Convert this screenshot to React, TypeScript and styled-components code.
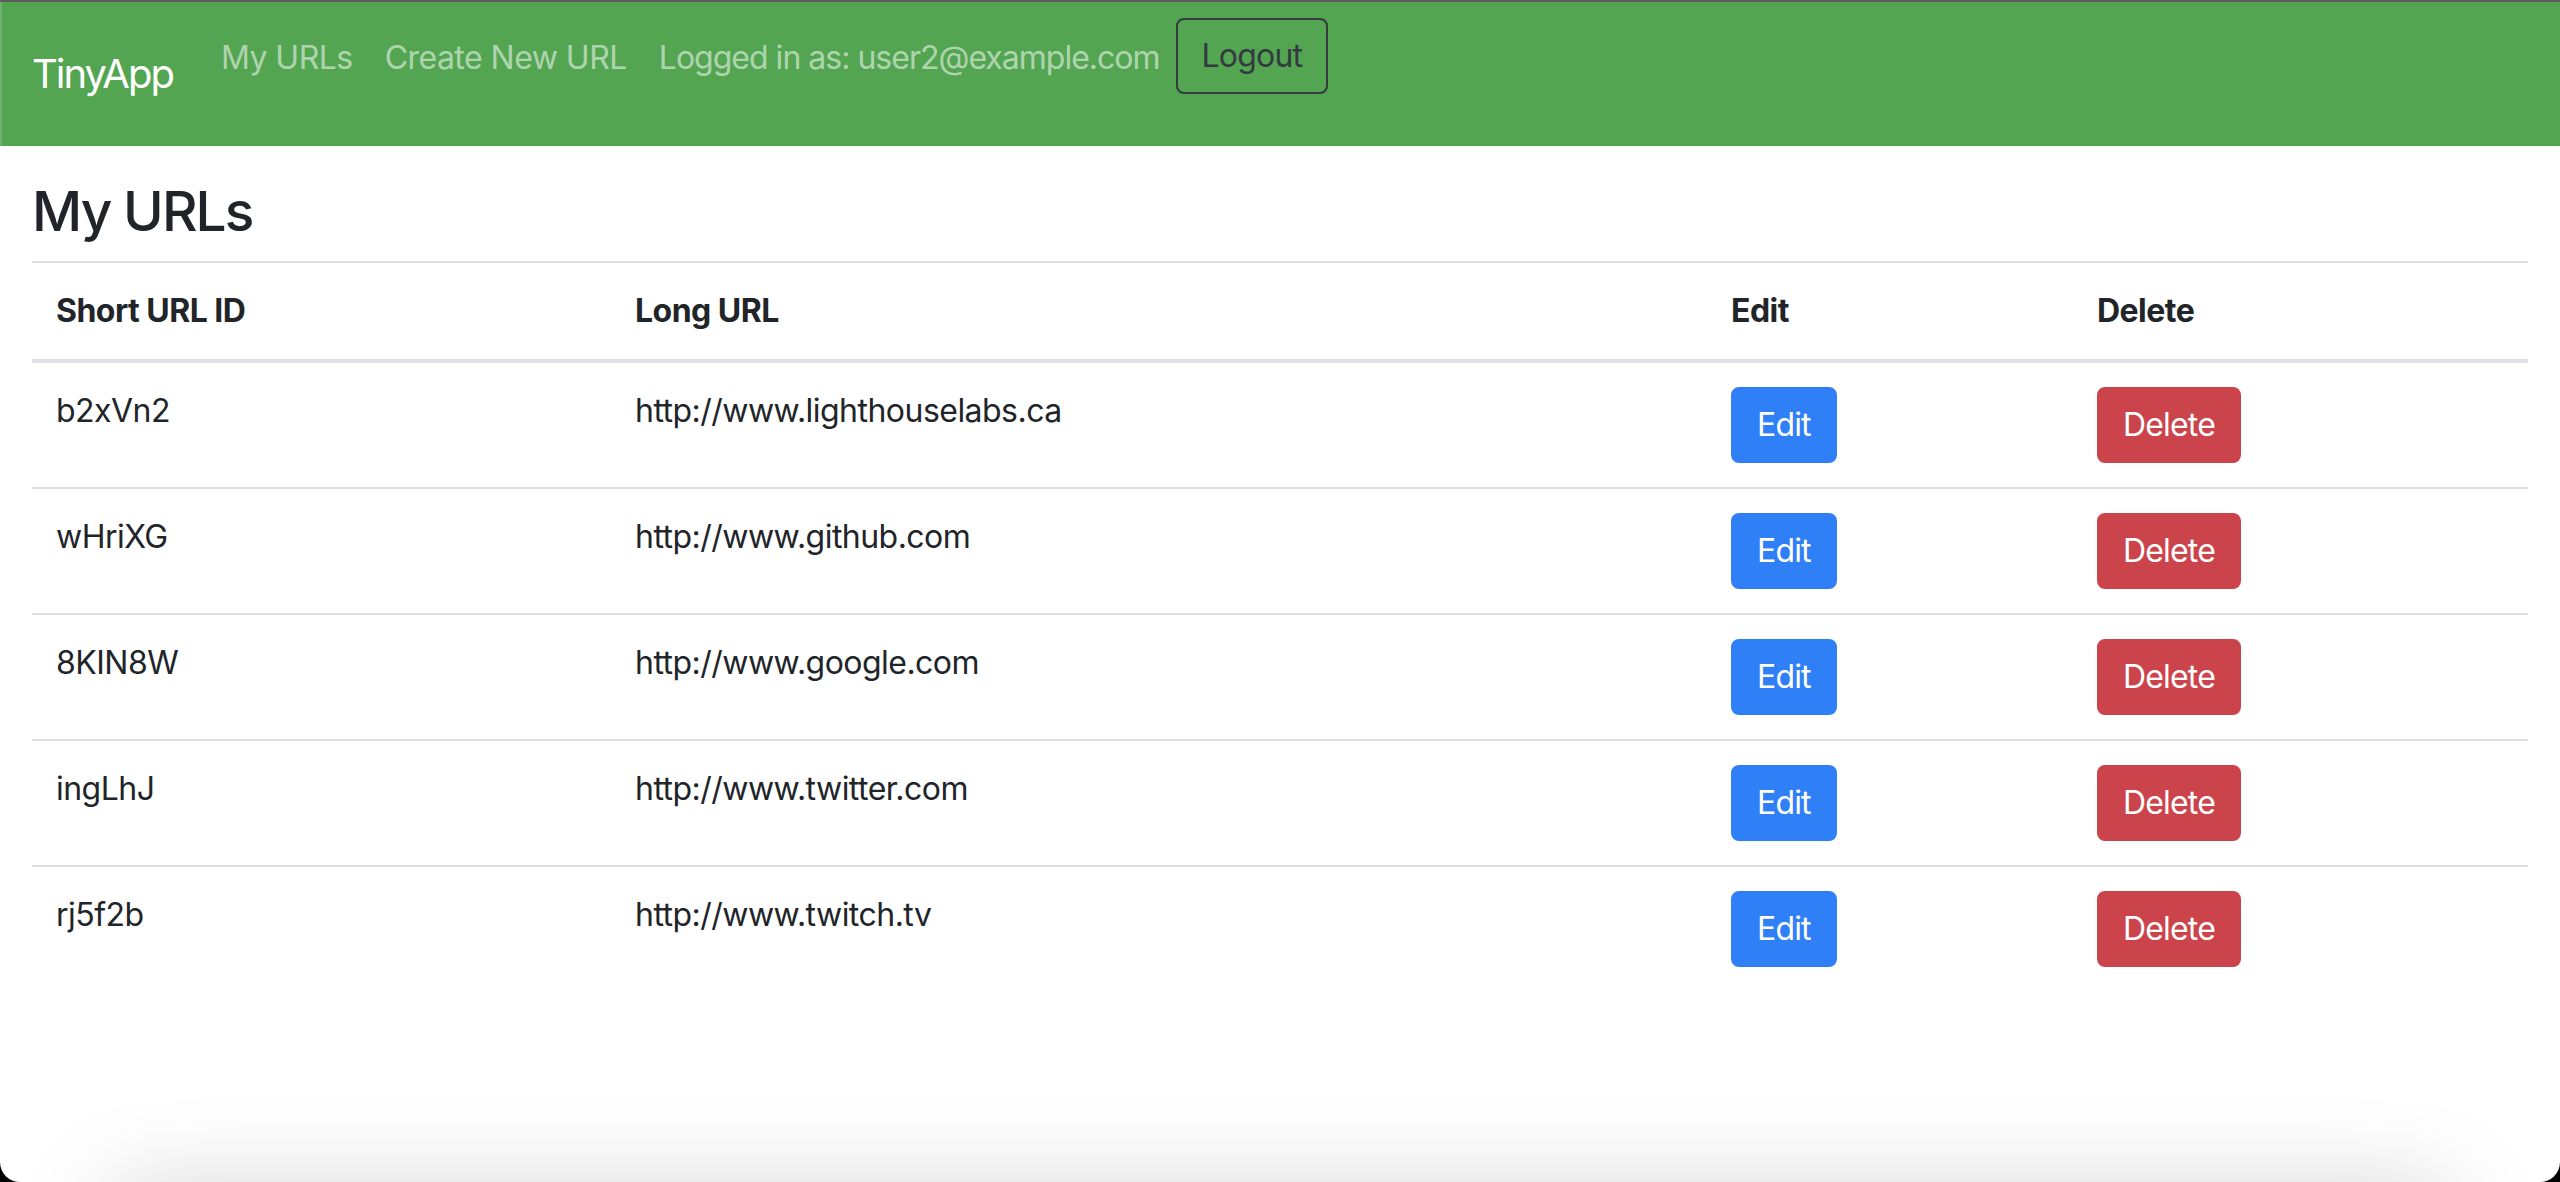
import React from "react";
import styled, { createGlobalStyle } from "styled-components";

type UrlRow = {
    id: string;
    longUrl: string;
};

const urls: UrlRow[] = [
    { id: "b2xVn2", longUrl: "http://www.lighthouselabs.ca" },
    { id: "wHriXG", longUrl: "http://www.github.com" },
    { id: "8KIN8W", longUrl: "http://www.google.com" },
    { id: "ingLhJ", longUrl: "http://www.twitter.com" },
    { id: "rj5f2b", longUrl: "http://www.twitch.tv" },
];

const columns = [
    { label: "Short URL ID", width: 579 },
    { label: "Long URL", width: 1096 },
    { label: "Edit", width: 366 },
    { label: "Delete", width: 455 },
];

const App: React.FC = () => {
    return (
        <>
            <GlobalStyle />
            <Frame>
                <Navbar>
                    <Brand href="#">TinyApp</Brand>
                    <NavList>
                        <NavLink href="#">My URLs</NavLink>
                        <NavLink href="#">Create New URL</NavLink>
                        <NavText>Logged in as: user2@example.com</NavText>
                        <LogoutButton type="button">Logout</LogoutButton>
                    </NavList>
                </Navbar>

                <Main>
                    <Heading>My URLs</Heading>
                    <Table>
                        <colgroup>
                            {columns.map(col => (
                                <Col key={col.label} $width={col.width} />
                            ))}
                        </colgroup>
                        <thead>
                            <tr>
                                {columns.map(col => (
                                    <HeadCell key={col.label}>{col.label}</HeadCell>
                                ))}
                            </tr>
                        </thead>
                        <tbody>
                            {urls.map(url => (
                                <tr key={url.id}>
                                    <Cell>{url.id}</Cell>
                                    <Cell>{url.longUrl}</Cell>
                                    <Cell>
                                        <ActionButton type="button" $variant="edit">
                                            Edit
                                        </ActionButton>
                                    </Cell>
                                    <Cell>
                                        <ActionButton type="button" $variant="delete">
                                            Delete
                                        </ActionButton>
                                    </Cell>
                                </tr>
                            ))}
                        </tbody>
                    </Table>
                </Main>

                <BottomShade />
            </Frame>
        </>
    );
};

export default App;

const GlobalStyle = createGlobalStyle`
    html, body {
        margin: 0;
        height: 100%;
        overflow: hidden;
        background: #000;
    }

    body {
        font-family: Inter, "Liberation Sans", sans-serif;
        letter-spacing: -0.033em;
        color: #212529;
    }

    * {
        box-sizing: border-box;
    }
`;

const Frame = styled.div`
    position: relative;
    height: 100vh;
    background: #fff;
    overflow: hidden;
    border-bottom-left-radius: 20px;
    border-bottom-right-radius: 20px;
`;

const Navbar = styled.nav`
    display: flex;
    align-items: center;
    padding: 16px 32px;
    background-color: #53a552;
    border-top: 2px solid #5c5c5c;
    box-shadow: inset 2px 0 0 rgba(255, 255, 255, 0.15);
`;

const Brand = styled.a`
    padding: 10px 0;
    margin-right: 32px;
    font-size: 40px;
    line-height: 60px;
    letter-spacing: -0.05em;
    color: #fff;
    text-decoration: none;
`;

const NavList = styled.div`
    display: flex;
    align-items: flex-start;
    align-self: flex-start;
    margin-bottom: 32px;
`;

const NavLink = styled.a`
    padding: 16px;
    font-size: 32px;
    line-height: 48px;
    color: rgba(255, 255, 255, 0.55);
    text-decoration: none;
`;

const NavText = styled.span`
    padding: 16px;
    font-size: 32px;
    line-height: 48px;
    letter-spacing: -0.031em;
    color: rgba(255, 255, 255, 0.55);
`;

const LogoutButton = styled.button`
    padding: 12px 24px;
    font-family: inherit;
    font-size: 32px;
    letter-spacing: -0.026em;
    line-height: 48px;
    color: #343a40;
    background: transparent;
    border: 2px solid #343a40;
    border-radius: 8px;
    cursor: pointer;
`;

const Main = styled.main`
    padding: 0 32px;
`;

const Heading = styled.h3`
    margin: 32px 0 16px;
    font-size: 55px;
    font-weight: 500;
    line-height: 67px;
    letter-spacing: -0.035em;
`;

const Table = styled.table`
    width: 100%;
    table-layout: fixed;
    border-collapse: collapse;
`;

const Col = styled.col<{ $width: number }>`
    width: ${({ $width }) => $width}px;
`;

const HeadCell = styled.th`
    padding: 24px;
    font-size: 32px;
    font-weight: 700;
    line-height: 48px;
    text-align: left;
    vertical-align: bottom;
    border-top: 2px solid #dee2e6;
    border-bottom: 4px solid #dee2e6;
`;

const Cell = styled.td`
    padding: 24px;
    font-size: 32px;
    line-height: 48px;
    vertical-align: top;
    border-top: 2px solid #dee2e6;
`;

const ActionButton = styled.button<{ $variant: "edit" | "delete" }>`
    padding: 12px 24px;
    font-family: inherit;
    font-size: 32px;
    letter-spacing: -0.026em;
    line-height: 48px;
    color: #fff;
    background-color: ${({ $variant }) => ($variant === "edit" ? "#2f80f7" : "#cc444b")};
    border: 2px solid ${({ $variant }) => ($variant === "edit" ? "#2f80f7" : "#cc444b")};
    border-radius: 8px;
    cursor: pointer;
`;

const BottomShade = styled.div`
    position: absolute;
    left: 115px;
    right: 115px;
    bottom: -80px;
    height: 60px;
    box-shadow: 0 0 100px 0 rgba(0, 0, 0, 0.25);
    pointer-events: none;
`;
